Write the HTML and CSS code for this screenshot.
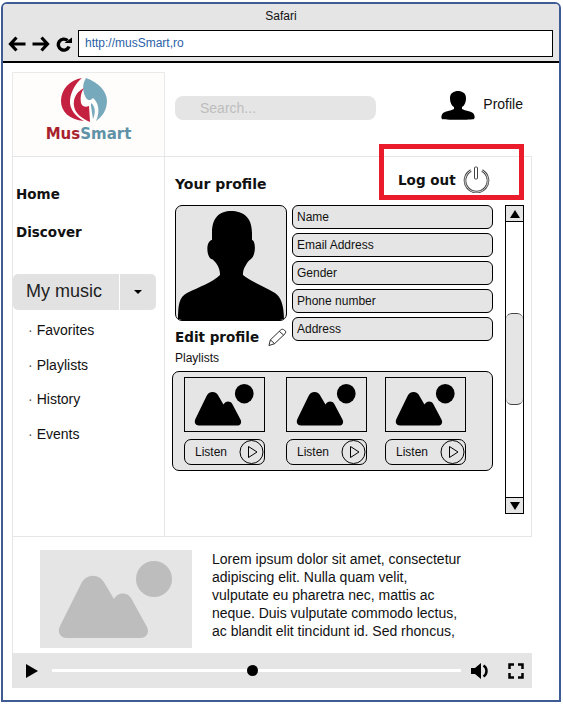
FILE: index.html
```html
<!DOCTYPE html>
<html lang="en">
<head>
<meta charset="utf-8">
<title>MusSmart</title>
<link rel="stylesheet" href="styles.css">
</head>
<body>
<svg class="defs" width="0" height="0" aria-hidden="true">
  <symbol id="pic" viewBox="0 0 152 98" preserveAspectRatio="none">
    <circle cx="114" cy="29" r="18"/>
    <path d="M41 34C46 23 60 23 65 34L74 49C78 42 87 42 91 48L107 77C110 83 106 88 100 88H27C20 88 17 82 20 76Z"/>
  </symbol>
  <symbol id="play" viewBox="0 0 26 26">
    <circle cx="12.500" cy="13" r="11.500" fill="none" stroke="#000" stroke-width="1"/>
    <path d="M9.500 7.500L18 13L9.500 18.500Z" fill="none" stroke="#000" stroke-width="1"/>
  </symbol>
</svg>
<div class="window">
  <header class="chrome">
    <div class="chrome-title">Safari</div>
    <div class="chrome-bar">
      <svg class="nav-icon" width="18" height="16" viewBox="0 0 18 16"><path d="M8.500 1.500L2.500 8L8.500 14.500M3 8H17.500" fill="none" stroke="#000" stroke-width="3.200"/></svg>
      <svg class="nav-icon" width="18" height="16" viewBox="0 0 18 16"><path d="M9.500 1.500L15.500 8L9.500 14.500M15 8H.5" fill="none" stroke="#000" stroke-width="3.200"/></svg>
      <svg class="nav-icon" width="16" height="16" viewBox="0 0 16 16"><path d="M13 10.500A5.500 5.500 0 1 1 11.500 4.500" fill="none" stroke="#000" stroke-width="3.400"/><path d="M8.500 7H16V1.500Z"/></svg>
      <div class="url">http://musSmart,ro</div>
    </div>
  </header>
  <div class="page">
    <div class="top">
      <div class="logo">
        <svg class="logo-mark" width="48" height="48" viewBox="0 0 48 48">
          <path fill="#77a9bd" d="M26 2C38 6 47 15 47 25C47 34 42 41 36 45C40 36 39 27 33 22C29 26 27 24 25 20C22 12 23 7 26 2Z"/>
          <path fill="#c4203f" d="M22 2C10 4 1 13 1 25C1 35 9 44 24 45C16 41 9 33 10 24C11 15 16 7 22 2Z"/>
          <path fill="#c4203f" d="M24 12C16 16 13 23 14 30C15 37 21 42 30 46L29 30C25 32 22 30 21 27C20 21 21 17 24 12Z"/>
          <path fill="#77a9bd" d="M31 27C35 30 36 36 33 43L31 30Z"/>
        </svg>
        <div class="logo-text"><span class="logo-red">Mus</span><span class="logo-blue">Smart</span></div>
      </div>
      <div class="top-right">
        <div class="search">Search...</div>
        <div class="profile-link">
          <span class="avatar">
            <svg width="36" height="30" viewBox="0 0 36 30"><path d="M10 8C10 3 14 1 18 1C22 1 26 3 26 8C26 13 24 16 22 17V19C26 21 30 21 33 23C35 25 35 28 34 29C33 30 3 30 2 29C1 28 1 25 3 23C6 21 10 21 14 19V17C12 16 10 13 10 8Z"/></svg>
          </span>
          <span>Profile</span>
        </div>
      </div>
    </div>
    <div class="main">
      <nav class="side">
        <a class="nav-main">Home</a>
        <a class="nav-main">Discover</a>
        <div class="dropdown">
          <span class="dropdown-label">My music</span>
          <span class="dropdown-caret"><i class="caret"></i></span>
        </div>
        <ul class="sub">
          <li>Favorites</li>
          <li>Playlists</li>
          <li>History</li>
          <li>Events</li>
        </ul>
      </nav>
      <section class="content">
        <h2 class="title">Your profile</h2>
        <div class="content-row">
          <div class="content-body">
            <div class="profile-grid">
              <div class="left-col">
                <div class="photo">
                  <svg width="112" height="116" viewBox="0 0 112 116"><path d="M37 28C37 12 45 6 56 6C68 6 77 12 77 28V35C81 36 81 50 76 54C73 56 72 58 71 60C68 64 68 68 68 70C75 76 90 82 100 88C106 92 109 100 109 116H3C3 100 4 92 12 88C24 82 38 77 45 70C45 66 44 62 41 58C39 56 38 54 36 54C31 50 31 36 37 35Z"/></svg>
                </div>
                <div class="edit">
                  <span>Edit profile</span>
                  <svg width="20" height="19" viewBox="0 0 20 19"><path d="M1 18L2.500 12L13.500 1.500C14.500 .5 16 .5 17.500 1.800C19 3.200 19 4.500 18 5.500L7 16ZM2.500 12L7 16M12 3L16.500 7" fill="none" stroke="#222" stroke-width="1"/></svg>
                </div>
              </div>
              <div class="fields">
                <div class="field">Name</div>
                <div class="field">Email Address</div>
                <div class="field">Gender</div>
                <div class="field">Phone number</div>
                <div class="field">Address</div>
              </div>
            </div>
            <div class="playlists-label">Playlists</div>
            <div class="playlists">
              <div class="card">
                <svg class="thumb"><use href="#pic"/></svg>
                <div class="listen"><span>Listen</span><svg class="listen-icon"><use href="#play"/></svg></div>
              </div>
              <div class="card">
                <svg class="thumb"><use href="#pic"/></svg>
                <div class="listen"><span>Listen</span><svg class="listen-icon"><use href="#play"/></svg></div>
              </div>
              <div class="card">
                <svg class="thumb"><use href="#pic"/></svg>
                <div class="listen"><span>Listen</span><svg class="listen-icon"><use href="#play"/></svg></div>
              </div>
            </div>
          </div>
          <div class="scrollbar">
            <div class="scroll-btn"><i class="tri-up"></i></div>
            <div class="scroll-track"><div class="scroll-thumb"></div></div>
            <div class="scroll-btn scroll-btn-end"><i class="tri-down"></i></div>
          </div>
        </div>
      </section>
    </div>
    <div class="feature">
      <svg class="feature-pic"><use href="#pic"/></svg>
      <p class="feature-text">Lorem ipsum dolor sit amet, consectetur adipiscing elit. Nulla quam velit, vulputate eu pharetra nec, mattis ac neque. Duis vulputate commodo lectus, ac blandit elit tincidunt id. Sed rhoncus,</p>
    </div>
    <div class="player">
      <i class="player-play"></i>
      <div class="progress"><i class="progress-dot"></i></div>
      <svg width="20" height="18" viewBox="0 0 20 18"><path d="M1 6H5L11 1V17L5 12H1Z"/><path d="M13.500 3.500C17.500 6 17.500 12 13.500 14.500" fill="none" stroke="#000" stroke-width="2.500"/></svg>
      <svg class="fullscreen" width="16" height="16" viewBox="0 0 16 16"><path d="M1.500 6V1.500H6M10 1.500H14.500V6M14.500 10V14.500H10M6 14.500H1.500V10" fill="none" stroke="#000" stroke-width="2.500"/></svg>
    </div>
    <div class="logout">
      <span>Log out</span>
      <svg width="27" height="27" viewBox="0 0 27 27">
        <path d="M8 4.500A11.500 11.500 0 1 0 19 4.500" fill="none" stroke="#444" stroke-width="2.600"/>
        <path d="M8 4.500A11.500 11.500 0 1 0 19 4.500" fill="none" stroke="#fff" stroke-width=".8"/>
        <rect x="11.500" y="1" width="3" height="12" rx="1" fill="#fff" stroke="#444"/>
      </svg>
    </div>
  </div>
</div>
</body>
</html>
```
FILE: styles.css
```css
* { box-sizing: border-box; }
html, body { margin: 0; padding: 0; background: #fff; }
body { font-family: "Liberation Sans", Arial, sans-serif; color: #111; font-size: 14px; }
.defs { position: absolute; }
.window { width: 560px; height: 700px; margin: 2px 0 0 1px; border: 2px solid #3f5b94; border-radius: 6px 6px 0 0; overflow: hidden; }
.chrome { height: 59px; background: #e5e5e5; border-bottom: 2px solid #000; }
.chrome-title { height: 26px; padding-top: 5px; text-align: center; font-size: 12px; line-height: 14px; }
.chrome-bar { display: flex; align-items: center; height: 27px; padding-left: 5px; }
.nav-icon { margin-right: 6px; flex: none; }
.url { width: 475px; height: 27px; margin-left: 0; padding-left: 6px; border: 1px solid #000; background: #fff; color: #2b5fa8; font-size: 12px; line-height: 25px; }
.page { position: relative; padding: 9px 0 0 9px; }
.top { display: flex; width: 520px; height: 85px; border-bottom: 1px solid #e6e6e6; }
.logo { display: flex; flex-direction: column; align-items: center; width: 153px; padding-top: 3px; border: 1px solid #eaeaea; border-bottom: 0; background: #fefdfc; }
.logo-mark { margin-left: -9px; }
.logo-text { margin-top: 1px; font-family: "DejaVu Sans", sans-serif; font-weight: 700; font-size: 15px; line-height: 18px; }
.logo-red { color: #a81f2d; }
.logo-blue { color: #5f92a7; }
.top-right { flex: 1; display: flex; justify-content: space-between; }
.search { width: 201px; height: 24px; margin: 24px 0 0 10px; padding-left: 25px; border-radius: 8px; background: #e5e5e5; color: #bdbdbd; font-size: 14px; line-height: 24px; }
.profile-link { display: flex; align-items: flex-start; gap: 7px; margin: 18px 9px 0 0; font-size: 14px; line-height: 28px; }
.avatar { display: block; width: 36px; height: 30px; border-radius: 6px; }
.main { display: flex; width: 520px; height: 380px; border-right: 1px solid #e6e6e6; border-bottom: 1px solid #e6e6e6; }
.side { width: 153px; flex: none; padding: 27px 0 0 0; border-left: 1px solid #e6e6e6; border-right: 1px solid #e6e6e6; }
.nav-main { display: block; height: 38px; padding-left: 3px; font-family: "DejaVu Sans", sans-serif; font-weight: 700; font-size: 13.500px; line-height: 20px; color: #111; }
.dropdown { display: flex; width: 143px; height: 36px; margin-top: 14px; border-radius: 5px; overflow: hidden; }
.dropdown-label { width: 106px; padding-left: 13px; background: #e2e2e2; font-size: 18px; line-height: 34px; color: #222; }
.dropdown-caret { display: flex; align-items: center; justify-content: center; width: 36px; margin-left: 1px; background: #e2e2e2; }
.caret { width: 0; height: 0; border: 4px solid transparent; border-top: 4px solid #000; border-bottom: 0; }
.sub { list-style: none; margin: 3px 0 0; padding: 0 0 0 15px; font-size: 14px; }
.sub li { position: relative; height: 34.500px; line-height: 34px; }
.sub li::before { content: "·"; margin-right: 4px; color: #555; }
.content { flex: 1; padding: 0 0 0 10px; }
.title { height: 48px; margin: 0; padding-top: 17px; font-family: "DejaVu Sans", sans-serif; font-weight: 700; font-size: 14px; line-height: 20px; color: #111; }
.content-row { display: flex; gap: 12px; }
.content-body { width: 318px; flex: none; }
.profile-grid { display: flex; gap: 5px; }
.left-col { width: 112px; flex: none; }
.photo { height: 116px; border: 1px solid #000; border-radius: 7px; background: #e5e5e5; overflow: hidden; }
.photo svg { display: block; margin: -1px; }
.edit { display: flex; align-items: center; gap: 9px; height: 24px; margin-top: 4px; font-family: "DejaVu Sans", sans-serif; font-weight: 700; font-size: 13.500px; white-space: nowrap; }
.fields { display: flex; flex: 1; flex-direction: column; gap: 4px; }
.field { height: 24px; padding-left: 4px; border: 1px solid #000; border-radius: 6px; background: #e5e5e5; font-size: 12px; line-height: 22px; }
.playlists-label { margin-top: 2px; font-size: 12px; line-height: 14px; }
.playlists { display: flex; gap: 21px; width: 321px; height: 100px; margin: 6px 0 0 -3px; padding: 5px 0 0 11px; border: 1px solid #000; border-radius: 7px; background: #e5e5e5; }
.card { width: 81px; flex: none; }
.card:last-child { margin-left: -3px; }
.thumb { display: block; width: 81px; height: 55px; border: 1px solid #000; }
.listen { display: flex; align-items: center; justify-content: space-between; height: 26px; margin-top: 7px; padding: 0 2px 0 10px; border: 1px solid #000; border-radius: 7px; font-size: 12px; }
.listen-icon { width: 26px; height: 26px; margin-right: -3px; }
.scrollbar { display: flex; flex-direction: column; width: 19px; height: 309px; border: 1px solid #000; background: #fff; }
.scroll-btn { display: flex; align-items: center; justify-content: center; height: 16px; flex: none; background: #e5e5e5; border-bottom: 1px solid #000; }
.scroll-btn-end { border-top: 1px solid #000; border-bottom: 0; }
.tri-up { width: 0; height: 0; border: 5px solid transparent; border-top: 0; border-bottom: 8px solid #000; }
.tri-down { width: 0; height: 0; border: 5px solid transparent; border-bottom: 0; border-top: 8px solid #000; }
.scroll-track { flex: 1; padding-top: 91px; }
.scroll-thumb { height: 92px; border-top: 1px solid #444; border-bottom: 1px solid #444; border-radius: 6px; background: #e5e5e5; }
.feature { display: flex; gap: 20px; width: 520px; height: 116px; padding: 13px 0 0 27px; border-left: 1px solid #e6e6e6; }
.feature-pic { width: 152px; height: 98px; flex: none; background: #e5e5e5; fill: #bdbdbd; }
.feature-text { width: 252px; margin: 0; font-size: 14px; line-height: 18px; color: #111; }
.player { display: flex; align-items: center; width: 520px; height: 35px; padding: 0 8px 0 14px; background: #e5e5e5; }
.player-play { width: 0; height: 0; flex: none; border: 7px solid transparent; border-left: 12px solid #000; border-right: 0; }
.progress { position: relative; width: 409px; height: 3px; margin: 0 9px 0 14px; background: #fff; }
.progress-dot { position: absolute; left: 195px; top: -4px; width: 11px; height: 11px; border-radius: 50%; background: #000; }
.fullscreen { margin-left: 18px; }
.logout { position: absolute; left: 376px; top: 81px; display: flex; align-items: center; gap: 7px; width: 145px; height: 56px; padding: 15px 0 0 14px; border: 5px solid #ea1c2c; font-family: "DejaVu Sans", sans-serif; font-weight: 700; font-size: 13.500px; }
```
